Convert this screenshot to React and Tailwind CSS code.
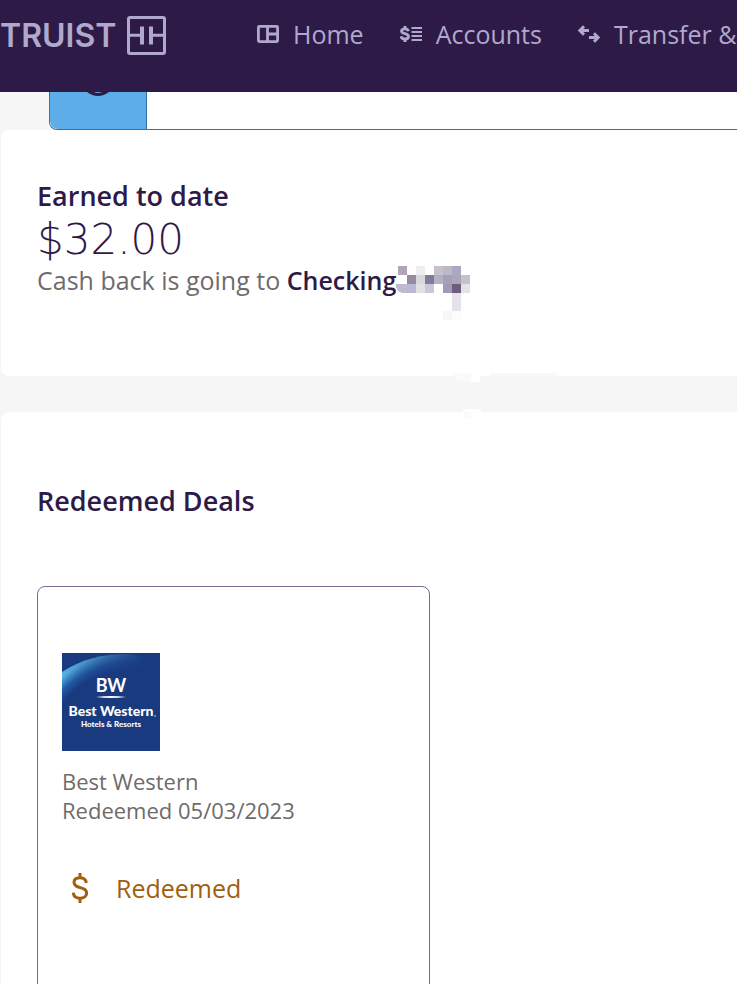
const NAV_ITEMS = [
  { label: "Home", icon: HomeIcon },
  { label: "Accounts", icon: AccountsIcon },
  { label: "Transfer &", icon: TransferIcon },
];

// x, y, width, height, color
const MASK_CELLS = [
  [2, 0, 9, 9, "#b0a5b9"],
  [20, 0, 9, 9, "#efeeef"],
  [38, 0, 9, 9, "#c8c0cc"],
  [47, 0, 9, 9, "#bbb9c9"],
  [56, 0, 9, 9, "#aaa8c1"],
  [11, 9, 9, 9, "#958a9f"],
  [20, 9, 9, 9, "#d9d8df"],
  [29, 9, 9, 9, "#807c9c"],
  [38, 9, 9, 9, "#b4b0c5"],
  [47, 9, 9, 9, "#a5a0b7"],
  [56, 9, 9, 9, "#aaa7ba"],
  [65, 9, 9, 9, "#c4c3cc"],
  [11, 18, 9, 9, "#b8b9d2"],
  [20, 18, 9, 9, "#e3e0e4"],
  [29, 18, 9, 9, "#c8c8d8"],
  [47, 18, 9, 9, "#9e9ab7"],
  [56, 18, 9, 9, "#705d7c"],
  [65, 18, 9, 9, "#e3e2e7"],
  [56, 27, 9, 18, "#e6e2e9"],
  [47, 45, 9, 9, "#f7f7f8"],
  [56, 45, 9, 9, "#fcfcfc"],
];

function HomeIcon() {
  return (
    <svg className="h-[18px] w-[22px]" viewBox="0 0 22 18" fill="none" stroke="currentColor" aria-hidden="true">
      <rect x="1.4" y="1.4" width="19.2" height="15.2" rx="1" strokeWidth="2.8" />
      <path d="M10.500 2v14M11 9h9" strokeWidth="2.8" />
    </svg>
  );
}

function AccountsIcon() {
  return (
    <svg className="h-4 w-[22px]" viewBox="0 0 22 16" fill="none" stroke="currentColor" aria-hidden="true">
      <path d="M8.4 5.2C8 3.4 6.6 2.8 4.8 2.8 2.9 2.8 1.5 3.5 1.5 5c0 3.4 7 2 7 5.5 0 1.6-1.5 2.5-3.6 2.5C2.7 13 1.4 12.1 1 10.3" strokeWidth="2.800" />
      <path d="M5 0v3M5 13v3" strokeWidth="3" />
      <path d="M11.500 2H22M11.500 6H22M11.500 10H22M11.500 14H22" strokeWidth="2.200" />
    </svg>
  );
}

function TransferIcon() {
  return (
    <svg className="h-[18px] w-[22px]" viewBox="0 0 22 18" fill="none" stroke="currentColor" strokeWidth="3" aria-hidden="true">
      <path d="M11 5.500H2.500M6 1.200 1.900 5.500 6 9.800" />
      <path d="M11 12.500h8.500M16 8.200l4.100 4.300L16 16.800" />
    </svg>
  );
}

function DollarIcon() {
  return (
    <svg className="h-[30px] w-4" viewBox="0 0 16 30" fill="none" stroke="currentColor" strokeWidth="3" aria-hidden="true">
      <path d="M14.300 10C14 6.500 11.600 4.700 8 4.700 4.300 4.700 2 6.400 2 9.300c0 7 12.600 3.600 12.600 10.700 0 3.200-2.600 5.300-6.600 5.300-4.200 0-6.500-2.100-6.700-5.600" />
      <path d="M8 0v5M8 25v5" />
    </svg>
  );
}

function Brand() {
  return (
    <a href="#home" aria-label="Truist" className="flex items-center gap-2">
      <span className="w-[118px] font-['Inter'] text-[32px] leading-10 font-semibold">TRUIST</span>
      <svg className="size-10" viewBox="0 0 40 40" fill="none" stroke="currentColor" aria-hidden="true">
        <rect x="2.500" y="1.500" width="36" height="36" rx="1.500" strokeWidth="3" />
        <path d="M3 19.300h13M25 19.300h13" strokeWidth="3" />
        <path d="M16 10.500v18M25 10.500v18" strokeWidth="4" />
      </svg>
    </a>
  );
}

function BestWesternLogo() {
  return (
    <svg className="size-[98px]" viewBox="0 0 98 98" role="img" aria-label="Best Western Hotels & Resorts">
      <defs>
        <radialGradient id="glow" gradientUnits="userSpaceOnUse" cx="66" cy="102" r="102">
          <stop offset="0.82" stopColor="#1a3a80" />
          <stop offset="0.9" stopColor="#1f5da5" />
          <stop offset="1" stopColor="#58b2e2" />
        </radialGradient>
        <linearGradient id="fade" x1="0" x2="1">
          <stop offset="0" stopColor="#1a3a80" stopOpacity="0" />
          <stop offset="0.85" stopColor="#1a3a80" />
        </linearGradient>
      </defs>
      <rect width="98" height="98" fill="#1a3a80" />
      <path d="M0 19C20 6 40 1 66 1L98 5V98H0Z" fill="url(#glow)" />
      <rect width="98" height="98" fill="url(#fade)" />
      <path d="M34 44q15-2 30 0-15 2-30 0Z" fill="#fff" />
      <g fill="#fff" textAnchor="middle" fontFamily="Lato, sans-serif" fontWeight="900">
        <text x="49" y="39" fontSize="18" fontWeight="700">BW</text>
        <text x="49" y="63" fontSize="14">Best Western</text>
        <text x="49" y="74" fontSize="8">Hotels &amp; Resorts</text>
      </g>
      <circle cx="93" cy="63" r="0.700" fill="#fff" />
    </svg>
  );
}

function MaskedDigits() {
  return (
    <svg className="h-[54px] w-[74px]" viewBox="0 0 74 54" shapeRendering="crispEdges" aria-hidden="true">
      <path d="M0 18h11v9H7q-6-1-7-7Z" fill="#bfbbcf" />
      {MASK_CELLS.map(([x, y, w, h, color]) => (
        <rect key={`${x}-${y}`} x={x} y={y} width={w} height={h} fill={color} />
      ))}
    </svg>
  );
}

// faint cells that spill over the gap between the two cards
function MaskSpill() {
  return (
    <svg className="absolute -bottom-[42px] left-[452px] h-[45px] w-[106px]" viewBox="0 0 106 45" aria-hidden="true">
      <path d="M0 0h18v9h-9Q1 8 0 0Z" fill="#fafafa" />
      <path d="M18 3h9v6h-9ZM10 36h18v3H10Z" fill="#fff" />
      <path d="M38 0H84L80 3H36ZM62 0H106L102 3H60Z" fill="#f9f9f9" />
      <path d="M11 39h7v6h-7Z" fill="#fafafa" />
    </svg>
  );
}

function Header() {
  return (
    <header className="flex h-[92px] items-start overflow-hidden bg-[#2e1a47] pt-4 text-[#b0a9cd]">
      <Brand />
      <nav className="ml-[91px] flex shrink-0 gap-9 whitespace-nowrap">
        {NAV_ITEMS.map(({ label, icon: Icon }) => (
          <a key={label} href="#nav" className="flex items-center gap-3.5 text-[25px] leading-9">
            <Icon />
            {label}
          </a>
        ))}
      </nav>
    </header>
  );
}

function OfferBanner() {
  return (
    <div className="ml-[49px] flex h-[38px] rounded-bl-lg border-b border-l border-[#2f72b0] bg-white">
      <div className="flex w-[97px] items-start justify-center rounded-bl-lg border-r border-[#2f72b0] bg-[#5dade8]">
        <svg className="h-1 w-6" viewBox="0 0 24 4" aria-hidden="true">
          <path d="M1 0Q12 8 23 0H16Q12 2 8 0Z" fill="#2e1a47" />
        </svg>
      </div>
    </div>
  );
}

function EarnedCard() {
  return (
    <section className="relative z-10 h-[246px] rounded-l-lg bg-white px-9 pt-12">
      <h2 className="text-[27px] leading-9 font-semibold">Earned to date</h2>
      <p className="font-['DejaVu_Sans'] text-[42px] leading-[52px] font-extralight">$32.00</p>
      <div className="flex items-start text-[25px] leading-7 whitespace-nowrap">
        <p className="text-[#6f6b6b]">
          Cash back is going to <strong className="font-semibold text-[#2e1a47]">Checking</strong>
        </p>
        <MaskedDigits />
      </div>
      <MaskSpill />
    </section>
  );
}

function DealCard() {
  return (
    <article className="h-[430px] w-[393px] rounded-lg border border-[#7c6992] px-6 pt-[66px]">
      <BestWesternLogo />
      <div className="mt-4 text-[22px] leading-[29px] text-[#6f6b6b]">
        <p>Best Western</p>
        <p>Redeemed 05/03/2023</p>
      </div>
      <div className="mt-[45px] flex items-center gap-7 pl-2.5 text-[#a0600f]">
        <DollarIcon />
        <span className="text-[25px] leading-9">Redeemed</span>
      </div>
    </article>
  );
}

export default function App() {
  return (
    <div className="h-screen overflow-hidden bg-[#f6f6f6] font-['Open_Sans',sans-serif] text-[#2e1a47]">
      <Header />
      <OfferBanner />
      <main className="flex flex-col gap-9 pl-px">
        <EarnedCard />
        <section className="rounded-l-lg bg-white px-9 pt-[71px]">
          <h2 className="mb-[67px] text-[27px] leading-9 font-semibold">Redeemed Deals</h2>
          <DealCard />
        </section>
      </main>
    </div>
  );
}
